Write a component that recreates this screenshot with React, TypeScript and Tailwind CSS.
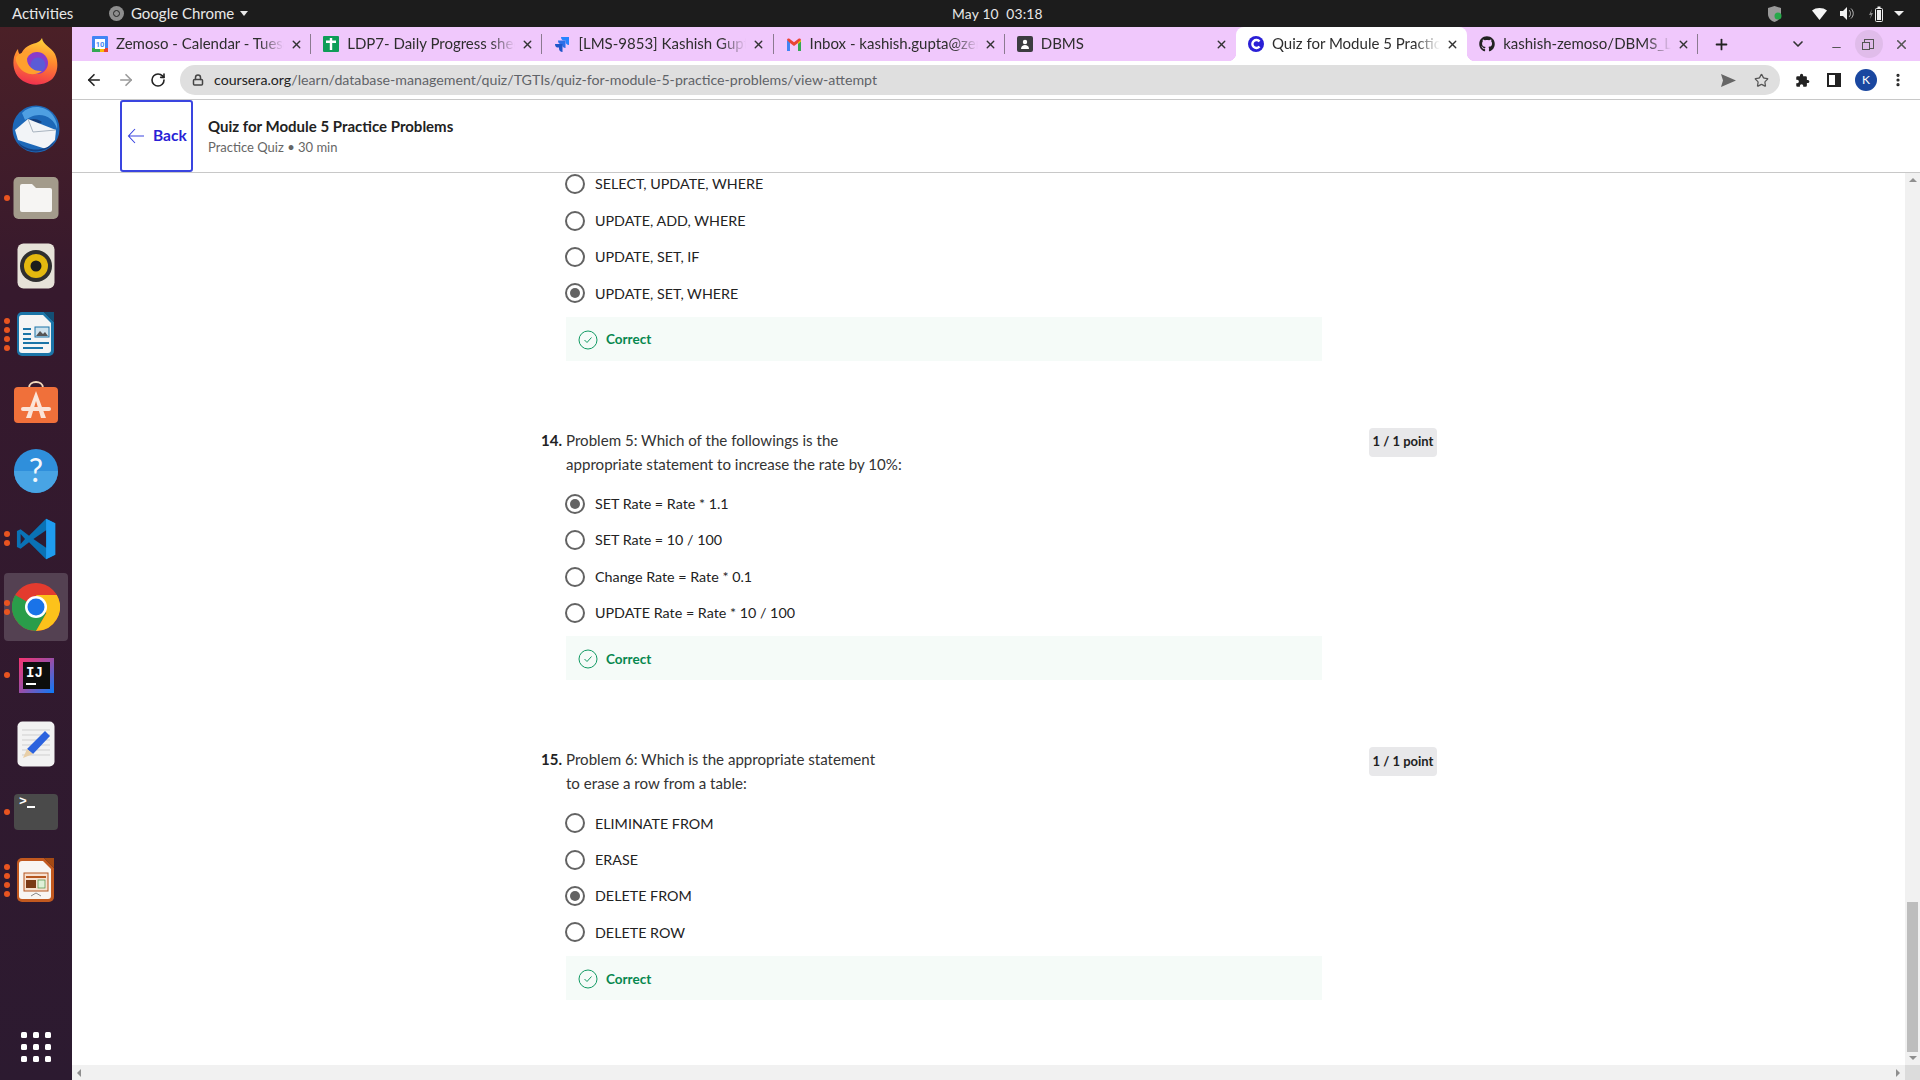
import { ReactNode } from "react";
import { FaGithub } from "react-icons/fa";
import { ArrowLeft, ArrowRight, RotateCw, Lock, Star, ChevronDown, Plus, X, Minus, EllipsisVertical } from "lucide-react";

const CONTENT_FONT = "font-['Lato','Noto_Sans',sans-serif]";

function FirefoxIcon() {
  return (
    <svg width="48" height="48" viewBox="0 0 48 48">
      <defs>
        <linearGradient id="ff" x1="0.6" y1="0" x2="0.4" y2="1">
          <stop offset="0" stopColor="#ffd53a" />
          <stop offset="0.45" stopColor="#ff8a2e" />
          <stop offset="1" stopColor="#f0304f" />
        </linearGradient>
      </defs>
      <path d="M30 1c1 7 9 9 13 16 4 9 3 20-4 26-8 6-20 6-28 1C3 39 0 30 2 20c1-3 2-6 4-8 0 3 1 5 3 6 2-8 10-11 15-12 3-1 5-3 6-5z" fill="url(#ff)" />
      <circle cx="25" cy="26" r="11" fill="#8a3bc9" />
      <circle cx="26" cy="28" r="7.500" fill="#5b5bd6" />
      <path d="M4 20c4-5 11-6 16-4-3 1-5 3-5 6 0 7 7 13 15 12-8 6-18 3-23-4-2-3-4-7-3-10z" fill="#ffa02e" />
    </svg>
  );
}

function ThunderbirdIcon() {
  return (
    <svg width="48" height="48" viewBox="0 0 48 48">
      <circle cx="24" cy="24" r="23.500" fill="#1d68b8" />
      <path d="M10 8c8-8 22-8 30 1 4 5 6 11 5 15-2-8-9-14-18-14-6 0-10 3-14 5z" fill="#4f9fe2" />
      <path d="M13 17c5-4 12-4 17 0l-8 5z" fill="#163f7c" />
      <path d="M3 25l13-11 28 11-1 10-9 9L6 35z" fill="#f2f4f7" />
      <path d="M16 14l5 13 23-2" fill="none" stroke="#a9b4c0" strokeWidth="1" />
      <path d="M6 37c8 9 26 11 36 0-6 12-30 13-36 0z" fill="#143f80" />
    </svg>
  );
}

function FilesIcon() {
  return (
    <svg width="46" height="44" viewBox="0 0 46 44">
      <rect width="45" height="42" x="0.5" y="1" rx="5" fill="#a39b8b" />
      <path d="M7 10a2 2 0 0 1 2-2h10l4 4h14a2 2 0 0 1 2 2v20a2 2 0 0 1-2 2H9a2 2 0 0 1-2-2z" fill="#f6f5f3" />
    </svg>
  );
}

function RhythmboxIcon() {
  return (
    <svg width="38" height="46" viewBox="0 0 38 46">
      <rect width="37" height="45" x="0.5" y="0.5" rx="6" fill="#e6e2d8" />
      <circle cx="19" cy="23" r="16" fill="#2f2f2f" />
      <circle cx="19" cy="23" r="12" fill="#e4b90f" />
      <circle cx="19" cy="23" r="5.500" fill="#1c1c1c" />
    </svg>
  );
}

function WriterIcon() {
  return (
    <svg width="38" height="46" viewBox="0 0 38 46">
      <path d="M5 1h22l10 10v29a5 5 0 0 1-5 5H5a5 5 0 0 1-5-5V6a5 5 0 0 1 5-5z" fill="#1b75a8" />
      <path d="M5 4h21l8 8v27a3 3 0 0 1-3 3H5a3 3 0 0 1-3-3V7a3 3 0 0 1 3-3z" fill="#f4f5f5" />
      <path d="M27 1l10 10V1z" fill="#134f75" />
      <rect x="6" y="17" width="8" height="2" fill="#1b75a8" />
      <rect x="6" y="22" width="8" height="2" fill="#1b75a8" />
      <rect x="6" y="27" width="8" height="2" fill="#1b75a8" />
      <rect x="18" y="16" width="14" height="10" fill="#cfe3ee" stroke="#1b75a8" />
      <path d="M19 25l4-5 3 3 2-2 3 4z" fill="#555" />
      <rect x="6" y="31" width="26" height="2" fill="#1b75a8" />
      <rect x="6" y="36" width="20" height="2" fill="#1b75a8" />
    </svg>
  );
}

function StoreIcon() {
  return (
    <svg width="44" height="42" viewBox="0 0 44 42">
      <path d="M15 7c0-8 14-8 14 0" fill="none" stroke="#f3d9bd" strokeWidth="2" />
      <rect y="6" width="44" height="36" rx="4" fill="#f0703a" />
      <path d="M22 10l-10 27h5l5-17 5 17h5z" fill="#fbe4d8" />
      <rect x="7" y="26" width="30" height="4" rx="2" fill="#fbe4d8" />
    </svg>
  );
}

function HelpIcon() {
  return (
    <svg width="44" height="44" viewBox="0 0 44 44">
      <circle cx="22" cy="22" r="22" fill="#2f8fdb" />
      <path d="M0 22a22 22 0 0 0 44 0z" fill="#48a4e4" />
      <text x="22" y="33" textAnchor="middle" fontSize="32" fill="#f4f8fb" fontFamily="Lato, sans-serif">?</text>
    </svg>
  );
}

function VsCodeIcon() {
  return (
    <svg width="44" height="44" viewBox="0 0 24 24">
      <path d="M17.500 1 8.200 10.200 3.600 6.700 1.600 7.700v8.600l2 1 4.600-3.500 9.300 9.200 5-2.400V3.400z" fill="#0a72b5" />
      <path d="M17.500 1l5 2.400v17.200l-5 2.400z" fill="#1f9cf0" />
      <path d="M17.500 7.200 10.600 12l6.900 4.800z" fill="#2e1a30" />
      <path d="M3.600 9.300 6 12l-2.400 2.700z" fill="#2e1a30" />
    </svg>
  );
}

function ChromeIcon({ size = 48 }: { size?: number }) {
  return (
    <svg width={size} height={size} viewBox="0 0 48 48">
      <circle cx="24" cy="24" r="24" fill="#e33b2e" />
      <path d="M24 24 3.200 12A24 24 0 0 0 24 48l10.400-18z" fill="#2a9d4a" />
      <path d="M24 12h20.800A24 24 0 0 1 24 48l10.400-18z" fill="#fcc21b" />
      <circle cx="24" cy="24" r="11" fill="#fff" />
      <circle cx="24" cy="24" r="8.500" fill="#1a73e8" />
    </svg>
  );
}

function IdeaIcon() {
  return (
    <svg width="35" height="35" viewBox="0 0 35 35">
      <defs>
        <linearGradient id="ij" x1="0" y1="0" x2="1" y2="1">
          <stop offset="0" stopColor="#f9336f" />
          <stop offset="0.5" stopColor="#9a4ea8" />
          <stop offset="1" stopColor="#087cfa" />
        </linearGradient>
      </defs>
      <rect width="35" height="35" fill="url(#ij)" />
      <rect x="4" y="4" width="27" height="27" fill="#0d0d0d" />
      <text x="7" y="19" fontSize="14" fontWeight="700" fill="#fff" fontFamily="Liberation Mono, monospace">IJ</text>
      <rect x="7" y="25" width="10" height="2" fill="#fff" />
    </svg>
  );
}

function EditorIcon() {
  return (
    <svg width="38" height="46" viewBox="0 0 38 46">
      <rect width="37" height="45" x="0.5" y="0.5" rx="5" fill="#f2f2f2" />
      <g stroke="#cfcfcf" strokeWidth="1">
        <path d="M5 9h28M5 14h28M5 19h28M5 24h28M5 29h28M5 34h28" />
      </g>
      <path d="M28 10l5 5-17 18-6-5z" fill="#2b62de" />
      <path d="M10 28l6 5-10 4z" fill="#e8cfa8" />
    </svg>
  );
}

function TerminalIcon() {
  return (
    <div className="relative h-[36px] w-[44px] rounded-[4px] bg-[#4a4a4a]">
      <span className="absolute left-[5px] top-[1px] font-['Liberation_Mono',monospace] text-[13px] font-bold leading-[14px] text-white">&gt;</span>
      <span className="absolute left-[13px] top-[12px] h-[2px] w-[8px] bg-white" />
    </div>
  );
}

function ImpressIcon() {
  return (
    <svg width="38" height="46" viewBox="0 0 38 46">
      <path d="M5 1h22l10 10v29a5 5 0 0 1-5 5H5a5 5 0 0 1-5-5V6a5 5 0 0 1 5-5z" fill="#c2591f" />
      <path d="M5 4h21l8 8v27a3 3 0 0 1-3 3H5a3 3 0 0 1-3-3V7a3 3 0 0 1 3-3z" fill="#f8f5f2" />
      <path d="M27 1l10 10V1z" fill="#a44a14" />
      <rect x="7" y="16" width="24" height="18" fill="#f7e1d1" stroke="#b5561f" />
      <rect x="9" y="19" width="20" height="2" fill="#b5561f" />
      <rect x="9" y="23" width="10" height="8" fill="#7a3a16" />
      <rect x="21" y="23" width="7" height="8" fill="#dff0d8" stroke="#4d8f46" strokeWidth="0.7" />
      <path d="M14 39l5-3 5 3" fill="none" stroke="#888" />
    </svg>
  );
}

function DockItem({ icon, dots = 0, active }: { icon: ReactNode; dots?: number; active?: boolean }) {
  return (
    <div className="relative flex h-[68.250px] w-[72px] items-center justify-center">
      {active && <div className="absolute inset-x-[4px] inset-y-0 rounded-[4px] bg-[#544152]" />}
      <div className="relative flex items-center justify-center">{icon}</div>
      {dots > 0 && (
        <div className="absolute left-[4px] top-0 flex h-full flex-col justify-center gap-[3px]">
          {Array.from({ length: dots }).map((_, i) => (
            <span key={i} className="h-[6px] w-[6px] rounded-full bg-[#e95420]" />
          ))}
        </div>
      )}
    </div>
  );
}

function Dock() {
  return (
    <aside className="flex w-[72px] shrink-0 flex-col bg-[linear-gradient(180deg,#4b2027_0%,#36192d_25%,#2c1a30_100%)]">
      <DockItem icon={<FirefoxIcon />} />
      <DockItem icon={<ThunderbirdIcon />} />
      <DockItem icon={<FilesIcon />} dots={1} />
      <DockItem icon={<RhythmboxIcon />} />
      <DockItem icon={<WriterIcon />} dots={4} />
      <DockItem icon={<StoreIcon />} />
      <DockItem icon={<HelpIcon />} />
      <DockItem icon={<VsCodeIcon />} dots={2} />
      <DockItem icon={<ChromeIcon />} dots={2} active />
      <DockItem icon={<IdeaIcon />} dots={1} />
      <DockItem icon={<EditorIcon />} />
      <DockItem icon={<TerminalIcon />} dots={1} />
      <DockItem icon={<ImpressIcon />} dots={4} />
      <div className="mt-auto mb-[18px] grid grid-cols-3 gap-x-[6px] gap-y-[6px] self-center">
        {Array.from({ length: 9 }).map((_, i) => (
          <span key={i} className="h-[6px] w-[6px] rounded-[1.500px] bg-white" />
        ))}
      </div>
    </aside>
  );
}

function TrayIcons() {
  return (
    <div className="flex items-center">
      <svg width="14" height="16" viewBox="0 0 14 16" className="mr-[30px]">
        <path d="M6.500 0 13 2v6c0 4-3 7-6.500 8C3 15 0 12 0 8V2z" fill="#9a9a9a" />
        <circle cx="10" cy="10" r="3.500" fill="#27a84a" />
      </svg>
      <svg width="15" height="12" viewBox="0 0 15 12" className="mr-[13px]">
        <path d="M0 2.500C4-.8 11-.8 15 2.500L7.500 12z" fill="#f5f5f5" />
      </svg>
      <svg width="14" height="13" viewBox="0 0 14 13" className="mr-[15px]">
        <path d="M0 4h3l4-4v13L3 9H0z" fill="#f0f0f0" />
        <path d="M9 3c2 2 2 5 0 7M11 1.500c3 3 3 7 0 10" fill="none" stroke="#bdbdbd" />
      </svg>
      <svg width="14" height="16" viewBox="0 0 14 16" className="mr-[11px]">
        <path d="M3 3 0 9h2l-1 4 3-6H2z" fill="#8a8a8a" />
        <rect x="6.500" y="2.500" width="7" height="13" rx="1" fill="none" stroke="#f0f0f0" />
        <rect x="8" y="4" width="4" height="10" fill="#f0f0f0" />
        <rect x="8.500" y="0.500" width="3" height="2" fill="#f0f0f0" />
      </svg>
      <span className="mr-[16px] h-0 w-0 border-x-[5px] border-t-[5px] border-x-transparent border-t-[#f0f0f0]" />
    </div>
  );
}

function TopBar() {
  return (
    <header className="relative flex h-[27px] items-center bg-[#1c1c1c] font-['Lato',sans-serif] text-[15px] text-[#e8e8e8]">
      <span className="ml-[12px] w-[97px]">Activities</span>
      <span className="flex h-[15px] w-[15px] items-center justify-center rounded-full bg-[#8e8e8e]">
        <span className="h-[7px] w-[7px] rounded-full border border-[#222]" />
      </span>
      <span className="ml-[7px]">Google Chrome</span>
      <span className="ml-[6px] h-0 w-0 border-x-[4.500px] border-t-[5px] border-x-transparent border-t-[#e8e8e8]" />
      <span className="absolute left-[952px] top-[4px] text-[13.800px] tracking-[0.2px]">May 10&nbsp;&nbsp;03:18</span>
      <div className="ml-auto">
        <TrayIcons />
      </div>
    </header>
  );
}

function CalendarFavicon() {
  return (
    <svg width="16" height="16" viewBox="0 0 16 16">
      <rect width="16" height="16" rx="1" fill="#4285f4" />
      <rect x="0" y="12" width="8" height="4" fill="#34a853" />
      <rect x="8" y="12" width="4" height="4" fill="#fbbc04" />
      <rect x="12" y="12" width="4" height="4" fill="#ea4335" />
      <rect x="3" y="3" width="10" height="10" fill="#fff" />
      <text x="8" y="11" fontSize="7.500" textAnchor="middle" fill="#4285f4" fontWeight="700" fontFamily="Roboto, sans-serif">10</text>
    </svg>
  );
}

function SheetsFavicon() {
  return (
    <svg width="16" height="16" viewBox="0 0 16 16">
      <rect width="16" height="16" rx="1" fill="#0f9d58" />
      <path d="M6.800 2h2.400v2.500H13V7H9.200v7H6.800V7H3V4.500h3.800z" fill="#fff" />
    </svg>
  );
}

function JiraFavicon() {
  return (
    <svg width="16" height="16" viewBox="0 0 16 16">
      <path d="M7 1h8v8c-2 0-3.500-1.500-3.500-3.500V4.500H10C8.300 4.500 7 3 7 1z" fill="#2684ff" />
      <path d="M4 4.500h7.500V12C9.500 12 8 10.500 8 8.500V8H6.500C5 8 4 6.500 4 4.500z" fill="#2b6fe8" />
      <path d="M1 8h7.500v8C6.500 16 5 14.500 5 12.500V11.500H3.500C2 11.500 1 10 1 8z" fill="#1d56c9" />
    </svg>
  );
}

function GmailFavicon() {
  return (
    <svg width="16" height="13" viewBox="0 0 16 13">
      <path d="M1 13V2l3 2v9z" fill="#4285f4" />
      <path d="M12 13V4l3-2v11z" fill="#34a853" />
      <path d="M1 2c0-1.500 1.500-2 2.500-1.300L8 4.300 12.500.7C13.500 0 15 .5 15 2l-3 3-4 3-4-3z" fill="#ea4335" />
      <path d="M12 4.500 15 2c0 .5 0 1 0 1.500L12 6z" fill="#fbbc04" />
    </svg>
  );
}

function ClassroomFavicon() {
  return (
    <div className="flex h-[16px] w-[16px] items-center justify-center rounded-[2px] bg-[#3c3c40]">
      <svg width="10" height="10" viewBox="0 0 10 10">
        <circle cx="5" cy="3" r="2.200" fill="#fff" />
        <path d="M1 10c0-3 2-4 4-4s4 1 4 4z" fill="#fff" />
      </svg>
    </div>
  );
}

function CourseraFavicon() {
  return (
    <svg width="16" height="16" viewBox="0 0 16 16">
      <circle cx="8" cy="8" r="8" fill="#2a1fd6" />
      <path d="M11.500 5.500a4 4 0 1 0 0 5" fill="none" stroke="#fff" strokeWidth="2.400" />
    </svg>
  );
}

function Tab({ icon, title, active, last }: { icon: ReactNode; title: string; active?: boolean; last?: boolean }) {
  return (
    <div className={`relative flex h-full w-[231.200px] shrink-0 items-center pl-[12px] ${active ? "rounded-t-[8px] bg-white" : ""}`}>
      <span className="flex w-[16px] shrink-0 items-center justify-center">{icon}</span>
      <span className="ml-[8px] mt-[-2px] w-[168px] overflow-hidden whitespace-nowrap text-[15px] text-[#2e2e2e] [mask-image:linear-gradient(90deg,#000_85%,transparent_100%)]">
        {title}
      </span>
      <X size={13} strokeWidth={2.500} className="absolute left-[210px] text-[#333]" />
      {!active && !last && <span className="absolute right-0 top-[7px] h-[20px] w-px bg-[#8b7a90]" />}
      {active && (
        <>
          <span className="absolute bottom-0 left-[-8px] h-[8px] w-[8px] bg-[radial-gradient(circle_at_0_0,transparent_8px,#fff_8.500px)]" />
          <span className="absolute bottom-0 right-[-8px] h-[8px] w-[8px] bg-[radial-gradient(circle_at_100%_0,transparent_8px,#fff_8.500px)]" />
        </>
      )}
    </div>
  );
}

function TabStrip() {
  return (
    <div className="flex h-[34px] items-center bg-[#f0c8fc] pl-[8px] font-['Lato',sans-serif]">
      <Tab icon={<CalendarFavicon />} title="Zemoso - Calendar - Tuesday, May 10" />
      <Tab icon={<SheetsFavicon />} title="LDP7- Daily Progress sheet - Google" />
      <Tab icon={<JiraFavicon />} title="[LMS-9853] Kashish Gupta - Jira Board" />
      <Tab icon={<GmailFavicon />} title="Inbox - kashish.gupta@zemoso.com" />
      <Tab icon={<ClassroomFavicon />} title="DBMS" last />
      <Tab icon={<CourseraFavicon />} title="Quiz for Module 5 Practice Problems" active last />
      <Tab icon={<FaGithub size={16} className="text-[#222]" />} title="kashish-zemoso/DBMS_LDP7: SQL" />
      <Plus size={17} strokeWidth={2.500} className="ml-[15px] text-[#222]" />
      <ChevronDown size={16} strokeWidth={2.500} className="ml-[60px] text-[#333]" />
      <Minus size={13} strokeWidth={2} className="ml-[24px] mt-[7px] text-[#555]" />
      <div className="ml-[12px] flex h-[28px] w-[28px] items-center justify-center rounded-full bg-[#e0bcea]">
        <span className="relative block h-[10px] w-[10px] border-[1.500px] border-[#555]">
          <span className="absolute -left-[3px] top-[2px] h-[8px] w-[8px] border-[1.500px] border-[#555] bg-[#e0bcea]" />
        </span>
      </div>
      <X size={15} strokeWidth={2.500} className="ml-[11px] text-[#555]" />
    </div>
  );
}

function Toolbar() {
  return (
    <div className="flex h-[38px] items-center bg-white pl-[13px]">
      <ArrowLeft size={18} strokeWidth={2.200} className="text-[#222]" />
      <ArrowRight size={18} strokeWidth={2.200} className="ml-[14px] text-[#9a9a9a]" />
      <RotateCw size={16} strokeWidth={2.400} className="ml-[15px] text-[#222]" />
      <div className="ml-[14px] flex h-[30px] w-[1600px] items-center rounded-full bg-[#dfdfdf] pl-[12px] pr-[11px] font-['Lato',sans-serif] text-[14.200px]">
        <Lock size={12} strokeWidth={3} className="text-[#444]" />
        <span className="ml-[10px] text-[#222]">coursera.org</span>
        <span className="text-[#5f6368]">/learn/database-management/quiz/TGTIs/quiz-for-module-5-practice-problems/view-attempt</span>
        <svg width="15" height="13" viewBox="0 0 15 13" className="ml-auto">
          <path d="M0 0l15 6.500L0 13l2-6.500z" fill="#666" />
        </svg>
        <Star size={15} strokeWidth={2} className="ml-[18px] text-[#555]" />
      </div>
      <svg width="15" height="15" viewBox="0 0 24 24" className="ml-[15px]">
        <path d="M20.500 11H19V7a2 2 0 0 0-2-2h-4V3.500a2.500 2.500 0 0 0-5 0V5H4a2 2 0 0 0-2 2v3.800h1.500a2.700 2.700 0 0 1 0 5.400H2V20a2 2 0 0 0 2 2h3.800v-1.500a2.700 2.700 0 0 1 5.400 0V22H17a2 2 0 0 0 2-2v-4h1.500a2.500 2.500 0 0 0 0-5z" fill="#222" />
      </svg>
      <div className="ml-[17px] flex h-[14px] w-[14px] justify-end border-2 border-[#222] bg-white">
        <span className="h-full w-[4px] bg-[#222]" />
      </div>
      <div className="ml-[14px] flex h-[22px] w-[22px] items-center justify-center rounded-full bg-[#1a47a0] font-['Lato',sans-serif] text-[12px] text-white">K</div>
      <EllipsisVertical size={16} strokeWidth={2.800} className="ml-[13px] text-[#222]" />
    </div>
  );
}

function PageHeader() {
  return (
    <div className={`flex h-[74px] shrink-0 border-y border-[#c8c8c8] bg-white ${CONTENT_FONT}`}>
      <div className="ml-[48px] flex h-full w-[73px] items-center rounded-[3px] border-2 border-[#3a45e0] pl-[5px]">
        <svg width="18" height="18" viewBox="0 0 18 18" className="text-[#3a45e0]">
          <path d="M17 9H1.500M8 2 1.500 9 8 16" fill="none" stroke="currentColor" strokeWidth="1.100" />
        </svg>
        <span className="ml-[8px] text-[15.500px] font-bold text-[#2a1fd6]">Back</span>
      </div>
      <div className="ml-[15px] flex flex-col justify-center">
        <div className="text-[15px] font-bold leading-[22px] text-[#222]">Quiz for Module 5 Practice Problems</div>
        <div className="text-[13px] leading-[20px] text-[#666]">Practice Quiz • 30 min</div>
      </div>
    </div>
  );
}

function Option({ label, checked }: { label: string; checked?: boolean }) {
  return (
    <div className="flex h-[36.400px] items-center">
      <span className="-ml-px flex h-[20px] w-[20px] items-center justify-center rounded-full border-2 border-[#636363] bg-white">
        {checked && <span className="h-[10px] w-[10px] rounded-full bg-[#636363]" />}
      </span>
      <span className="ml-[10px] text-[14.300px] text-[#222]">{label}</span>
    </div>
  );
}

function Correct() {
  return (
    <div className="mt-[5px] flex h-[44px] items-center bg-[#f5fbf8] pl-[12px] pt-[2px]">
      <svg width="20" height="20" viewBox="0 0 20 20">
        <circle cx="10" cy="10" r="9" fill="none" stroke="#119a63" strokeWidth="1" />
        <path d="M6.500 10l2.500 2.500 4.500-5" fill="none" stroke="#119a63" strokeWidth="1" />
      </svg>
      <span className="ml-[8px] text-[13.500px] font-bold text-[#06874e]">Correct</span>
    </div>
  );
}

function Question({ num, lines, options, checked }: { num: number; lines: string[]; options: string[]; checked: number }) {
  return (
    <section className="mt-[67px] flex">
      <span className="w-[25px] text-[15px] font-bold leading-[24px] text-[#222]">{num}.</span>
      <div className="w-[756px]">
        <div className="mb-[10px] text-[15.100px] leading-[24px] text-[#333]">
          {lines.map((line) => (
            <div key={line}>{line}</div>
          ))}
        </div>
        {options.map((o, i) => (
          <Option key={o} label={o} checked={i === checked} />
        ))}
        <Correct />
      </div>
      <span className="ml-[47px] flex h-[29px] w-[68px] items-center justify-center rounded-[4px] bg-[#e8e8ea] text-[13px] font-bold text-[#222]">1 / 1 point</span>
    </section>
  );
}

function VScrollbar() {
  return (
    <div className="flex w-[15px] shrink-0 flex-col items-center bg-[#f1f1f1] py-[5px]">
      <span className="h-0 w-0 border-x-[4px] border-b-[4px] border-x-transparent border-b-[#8f8f8f]" />
      <div className="mt-auto h-[150px] w-[11px] bg-[#bdbdbd]" />
      <span className="mt-[4px] h-0 w-0 border-x-[4px] border-t-[4px] border-x-transparent border-t-[#8f8f8f]" />
    </div>
  );
}

function HScrollbar() {
  return (
    <div className="flex h-[15px] shrink-0 items-center bg-[#f1f1f1]">
      <span className="ml-[5px] h-0 w-0 border-y-[4px] border-r-[4px] border-y-transparent border-r-[#8f8f8f]" />
      <span className="ml-auto mr-[5px] h-0 w-0 border-y-[4px] border-l-[4px] border-y-transparent border-l-[#8f8f8f]" />
      <div className="h-full w-[15px] bg-[#dcdcdc]" />
    </div>
  );
}

export default function App() {
  return (
    <div className="flex h-[1080px] w-[1920px] flex-col overflow-hidden bg-white">
      <TopBar />
      <div className="flex min-h-0 flex-1">
        <Dock />
        <div className="flex min-w-0 flex-1 flex-col">
          <TabStrip />
          <Toolbar />
          <PageHeader />
          <div className="flex min-h-0 flex-1">
            <main className={`min-w-0 flex-1 overflow-hidden pl-[469px] ${CONTENT_FONT}`}>
              <div className="ml-[25px] mt-[-7px] w-[756px]">
                <Option label="SELECT, UPDATE, WHERE" />
                <Option label="UPDATE, ADD, WHERE" />
                <Option label="UPDATE, SET, IF" />
                <Option label="UPDATE, SET, WHERE" checked />
                <Correct />
              </div>
              <Question
                num={14}
                lines={["Problem 5: Which of the followings is the", "appropriate statement to increase the rate by 10%:"]}
                options={["SET Rate = Rate * 1.1", "SET Rate = 10 / 100", "Change Rate = Rate * 0.1", "UPDATE Rate = Rate * 10 / 100"]}
                checked={0}
              />
              <Question
                num={15}
                lines={["Problem 6: Which is the appropriate statement", "to erase a row from a table:"]}
                options={["ELIMINATE FROM", "ERASE", "DELETE FROM", "DELETE ROW"]}
                checked={2}
              />
            </main>
            <VScrollbar />
          </div>
          <HScrollbar />
        </div>
      </div>
    </div>
  );
}
